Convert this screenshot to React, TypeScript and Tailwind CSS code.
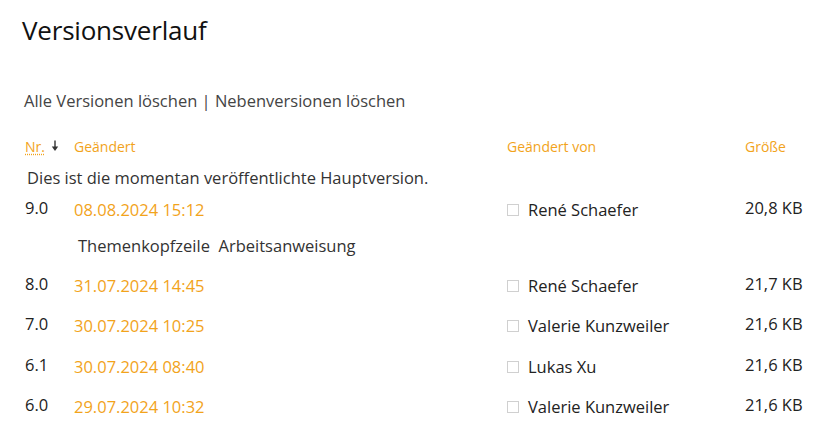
import React from 'react';

interface Version {
  nr: string;
  date: string;
  by: string;
  size: string;
  note?: string;
  comment?: string;
}

const versions: Version[] = [
  { nr: '9.0', date: '08.08.2024 15:12', by: 'René Schaefer', size: '20,8 KB', note: 'Dies ist die momentan veröffentlichte Hauptversion.', comment: 'Themenkopfzeile\u00a0 Arbeitsanweisung' },
  { nr: '8.0', date: '31.07.2024 14:45', by: 'René Schaefer', size: '21,7 KB' },
  { nr: '7.0', date: '30.07.2024 10:25', by: 'Valerie Kunzweiler', size: '21,6 KB' },
  { nr: '6.1', date: '30.07.2024 08:40', by: 'Lukas Xu', size: '21,6 KB' },
  { nr: '6.0', date: '29.07.2024 10:32', by: 'Valerie Kunzweiler', size: '21,6 KB' },
];

const font = { fontFamily: '"Open Sans", "Noto Sans", sans-serif' };

function SortArrow() {
  return (
    <svg width="8" height="12" viewBox="0 0 8 12" className="mt-[-3px]">
      <path d="M4 0.5V8" stroke="#333" strokeWidth="1.4" />
      <path d="M0.8 6.5L4 11L7.2 6.5Z" fill="#333" />
    </svg>
  );
}

export default function App() {
  return (
    <div className="w-[821px] h-[431px] overflow-hidden bg-white text-[#333]" style={font}>
      <h1 className="pl-[22px] pt-[11px] text-[26px] leading-[38px] text-[#111] tracking-[-0.2px]">Versionsverlauf</h1>

      <div className="pl-[24px] mt-[40px] text-[16.5px] leading-[24px] text-[#444]">
        <a className="cursor-pointer">Alle Versionen löschen</a>
        <span> | </span>
        <a className="cursor-pointer">Nebenversionen löschen</a>
      </div>

      <div className="mt-[24px] pl-[25px]">
        <div className="grid grid-cols-[49px_433px_238px_1fr] text-[14px] leading-[20px] text-[#f2a31b]">
          <div className="flex items-center gap-[6px]">
            <span className="underline decoration-dotted underline-offset-2">Nr.</span>
            <SortArrow />
          </div>
          <div>Geändert</div>
          <div>Geändert von</div>
          <div>Größe</div>
        </div>

        {versions.map((v) => (
          <div key={v.nr}>
            {v.note && <div className="pl-[2px] mt-[10px] text-[16.5px] leading-[22px]">{v.note}</div>}
            <div className={`grid grid-cols-[49px_433px_238px_1fr] items-start text-[16.5px] whitespace-nowrap ${v.note ? 'mt-[9px]' : 'mt-[16.5px]'}`}>
              <div className="leading-[20px] text-[#222]">{v.nr}</div>
              <div className="leading-[24px] text-[#f2a31b]">{v.date}</div>
              <div className="flex items-center gap-[9px] leading-[24px] text-[#222]">
                <span className="inline-block w-[12px] h-[12px] border border-[#d0d0d0]"></span>
                <span>{v.by}</span>
              </div>
              <div className="leading-[20px] text-[#222]">{v.size}</div>
            </div>
            {v.comment && <div className="pl-[53px] mt-[13px] text-[16.5px] leading-[22px] text-[#333]">{v.comment}</div>}
          </div>
        ))}
      </div>
    </div>
  );
}
